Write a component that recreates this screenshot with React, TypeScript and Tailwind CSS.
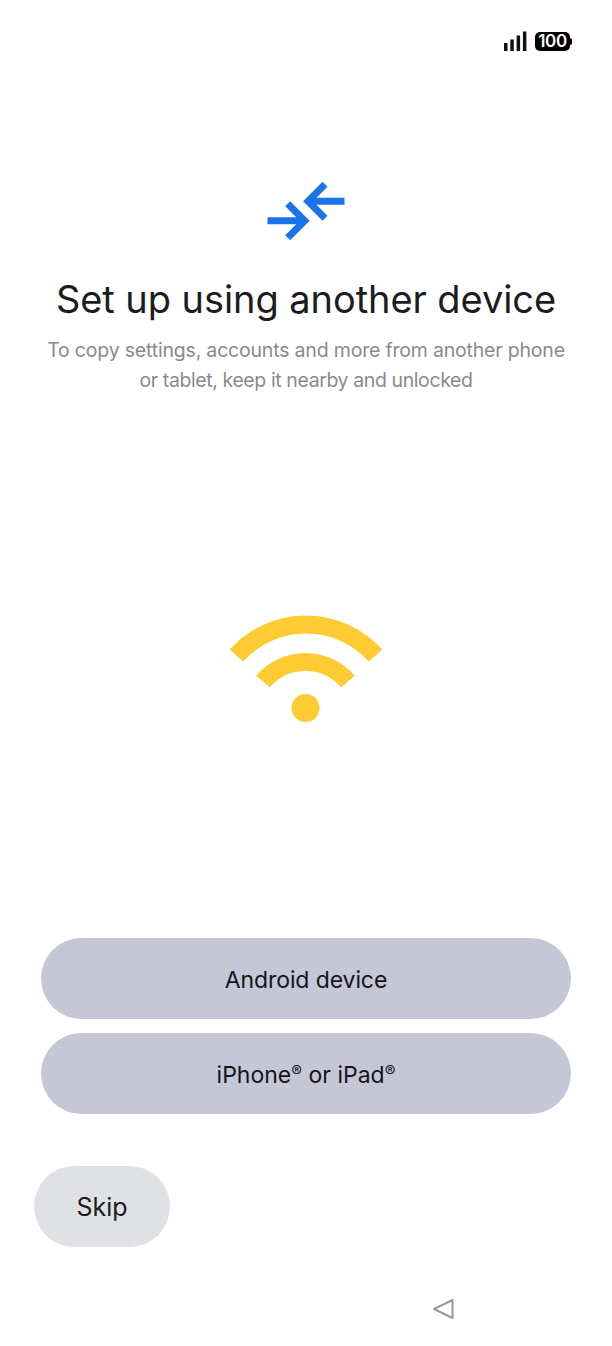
import React from 'react';

const FONT = "font-['Inter','Noto_Sans',sans-serif]";

function SignalBars() {
  return (
    <svg width="23" height="21" viewBox="0 0 23 21" fill="#111">
      <rect x="0" y="12" width="3.5" height="8" />
      <rect x="6.3" y="8.5" width="3.5" height="11.5" />
      <rect x="12.6" y="4.5" width="3.5" height="15.5" />
      <rect x="18.9" y="0.5" width="3.5" height="19.5" />
    </svg>
  );
}

function Battery() {
  return (
    <div className="flex items-center">
      <div className="w-[35px] h-[19px] rounded-[5px] bg-black flex items-center justify-center text-white text-[17px] font-semibold leading-none tracking-[-0.3px]">
        100
      </div>
      <div className="w-[2px] h-[7px] bg-black rounded-r-sm" />
    </div>
  );
}

function TransferIcon() {
  return (
    <svg width="78" height="58" viewBox="0 0 78 58" fill="none" stroke="#1a73e8" strokeWidth="7">
      {/* lower arrow */}
      <path d="M0.5 38.7H37" />
      <path d="M20.7 21.7L37.7 38.7L20.7 55.7" />
      {/* upper arrow */}
      <path d="M77.5 19.3H42" />
      <path d="M58 2.3L41 19.3L58 36.3" />
    </svg>
  );
}

function WifiIcon() {
  return (
    <svg width="152" height="108" viewBox="0 0 152 108">
      <g fill="none" stroke="#fecb33" strokeWidth="18">
        <path d="M6.5 40.5A93.4 93.4 0 0 1 145.5 40.5" />
        <path d="M33 66.5A56 56 0 0 1 118 66.5" />
      </g>
      <circle cx="75.5" cy="93" r="14" fill="#fecb33" />
    </svg>
  );
}

export default function App() {
  return (
    <div className={`${FONT} w-[612px] h-[1346px] bg-white flex flex-col overflow-hidden`}>
      {/* Status bar */}
      <div className="flex items-center justify-end gap-[8px] pt-[32px] pr-[40px] h-[51px]">
        <SignalBars />
        <Battery />
      </div>

      {/* Heading */}
      <div className="flex flex-col items-center mt-[131px]">
        <TransferIcon />
        <h1 className="mt-[32px] text-[38px] leading-[54px] font-normal text-[#1c1c1e] tracking-[-0.07px]">
          Set up using another device
        </h1>
        <p className="mt-[9px] text-[19.5px] leading-[30px] text-[#8a8a8c] text-center tracking-[-0.19px]">
          To copy settings, accounts and more from another phone
          <br />
          <span className="tracking-[-0.4px]">or tablet, keep it nearby and unlocked</span>
        </p>
      </div>

      {/* Illustration */}
      <div className="flex justify-center mt-[220px]">
        <WifiIcon />
      </div>

      {/* Actions */}
      <div className="flex flex-col gap-[14px] mt-[215px] ml-[41px] w-[530px]">
        <button className="h-[81px] pt-[3px] rounded-full bg-[#c5c7d6] text-[23px] font-normal tracking-[-0.1px] text-[#14141a]">
          Android device
        </button>
        <button className="h-[81px] pt-[3px] rounded-full bg-[#c5c7d6] text-[23px] font-normal text-[#14141a]">
          iPhone<span className="text-[16px] align-[6px]">®</span> or iPad<span className="text-[16px] align-[6px]">®</span>
        </button>
      </div>

      <button className="mt-[52px] ml-[34px] w-[136px] h-[81px] pt-[3px] rounded-full bg-[#e0e1e4] text-[25px] text-[#1c1c1e]">
        Skip
      </button>

      {/* Nav bar */}
      <div className="flex justify-end pr-[158px] mt-[51px]">
        <svg width="22" height="22" viewBox="0 0 22 22" fill="none" stroke="#999" strokeWidth="2" strokeLinejoin="round">
          <path d="M20.5 2V20L2 11Z" />
        </svg>
      </div>
    </div>
  );
}
